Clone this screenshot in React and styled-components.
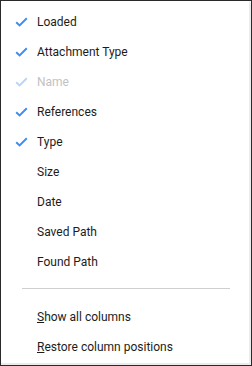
import React from "react";
import styled, { createGlobalStyle } from "styled-components";

const Global = createGlobalStyle`
  html, body { margin: 0; padding: 0; background: #fff; }
  body { font-family: Roboto, "Liberation Sans", sans-serif; }
`;

const Frame = styled.div`
  width: 252px;
  height: 366px;
  box-sizing: border-box;
  border: 1px solid #2a2a2a;
  background: #fff;
  overflow: hidden;
`;

const Menu = styled.div`
  height: 100%;
  box-sizing: border-box;
  border-top-right-radius: 4px;
  box-shadow: inset -2px -2px 0 #ececec;
  padding-top: 6px;
`;

const Item = styled.div`
  display: flex;
  align-items: center;
  height: 30px;
  font-size: 12px;
  color: ${(p) => (p.disabled ? "#c2c2c2" : "#1c1c1c")};
`;

const CheckSlot = styled.span`
  width: 36px;
  display: flex;
  justify-content: flex-end;
  padding-right: 9px;
  box-sizing: border-box;
`;

const Separator = styled.div`
  height: 1px;
  background: #cfcfcf;
  margin: 11px 21px 13px 21px;
`;

const Key = styled.span`
  text-decoration: underline;
`;

const Check = ({ faded }) => (
  <svg width="13" height="10" viewBox="0 0 13 10">
    <path
      d="M1.2 5.2 L4.6 8.4 L11.8 1.2"
      fill="none"
      stroke={faded ? "#b9d5f7" : "#3d8ef0"}
      strokeWidth="2"
    />
  </svg>
);

const columns = [
  { label: "Loaded", checked: true },
  { label: "Attachment Type", checked: true },
  { label: "Name", checked: true, disabled: true },
  { label: "References", checked: true },
  { label: "Type", checked: true },
  { label: "Size" },
  { label: "Date" },
  { label: "Saved Path" },
  { label: "Found Path" },
];

export default function App() {
  return (
    <>
      <Global />
      <Frame>
        <Menu>
          {columns.map((c) => (
            <Item key={c.label} disabled={c.disabled}>
              <CheckSlot>{c.checked && <Check faded={c.disabled} />}</CheckSlot>
              {c.label}
            </Item>
          ))}
          <Separator />
          <Item>
            <CheckSlot />
            <span>
              <Key>S</Key>how all columns
            </span>
          </Item>
          <Item>
            <CheckSlot />
            <span>
              <Key>R</Key>estore column positions
            </span>
          </Item>
        </Menu>
      </Frame>
    </>
  );
}
